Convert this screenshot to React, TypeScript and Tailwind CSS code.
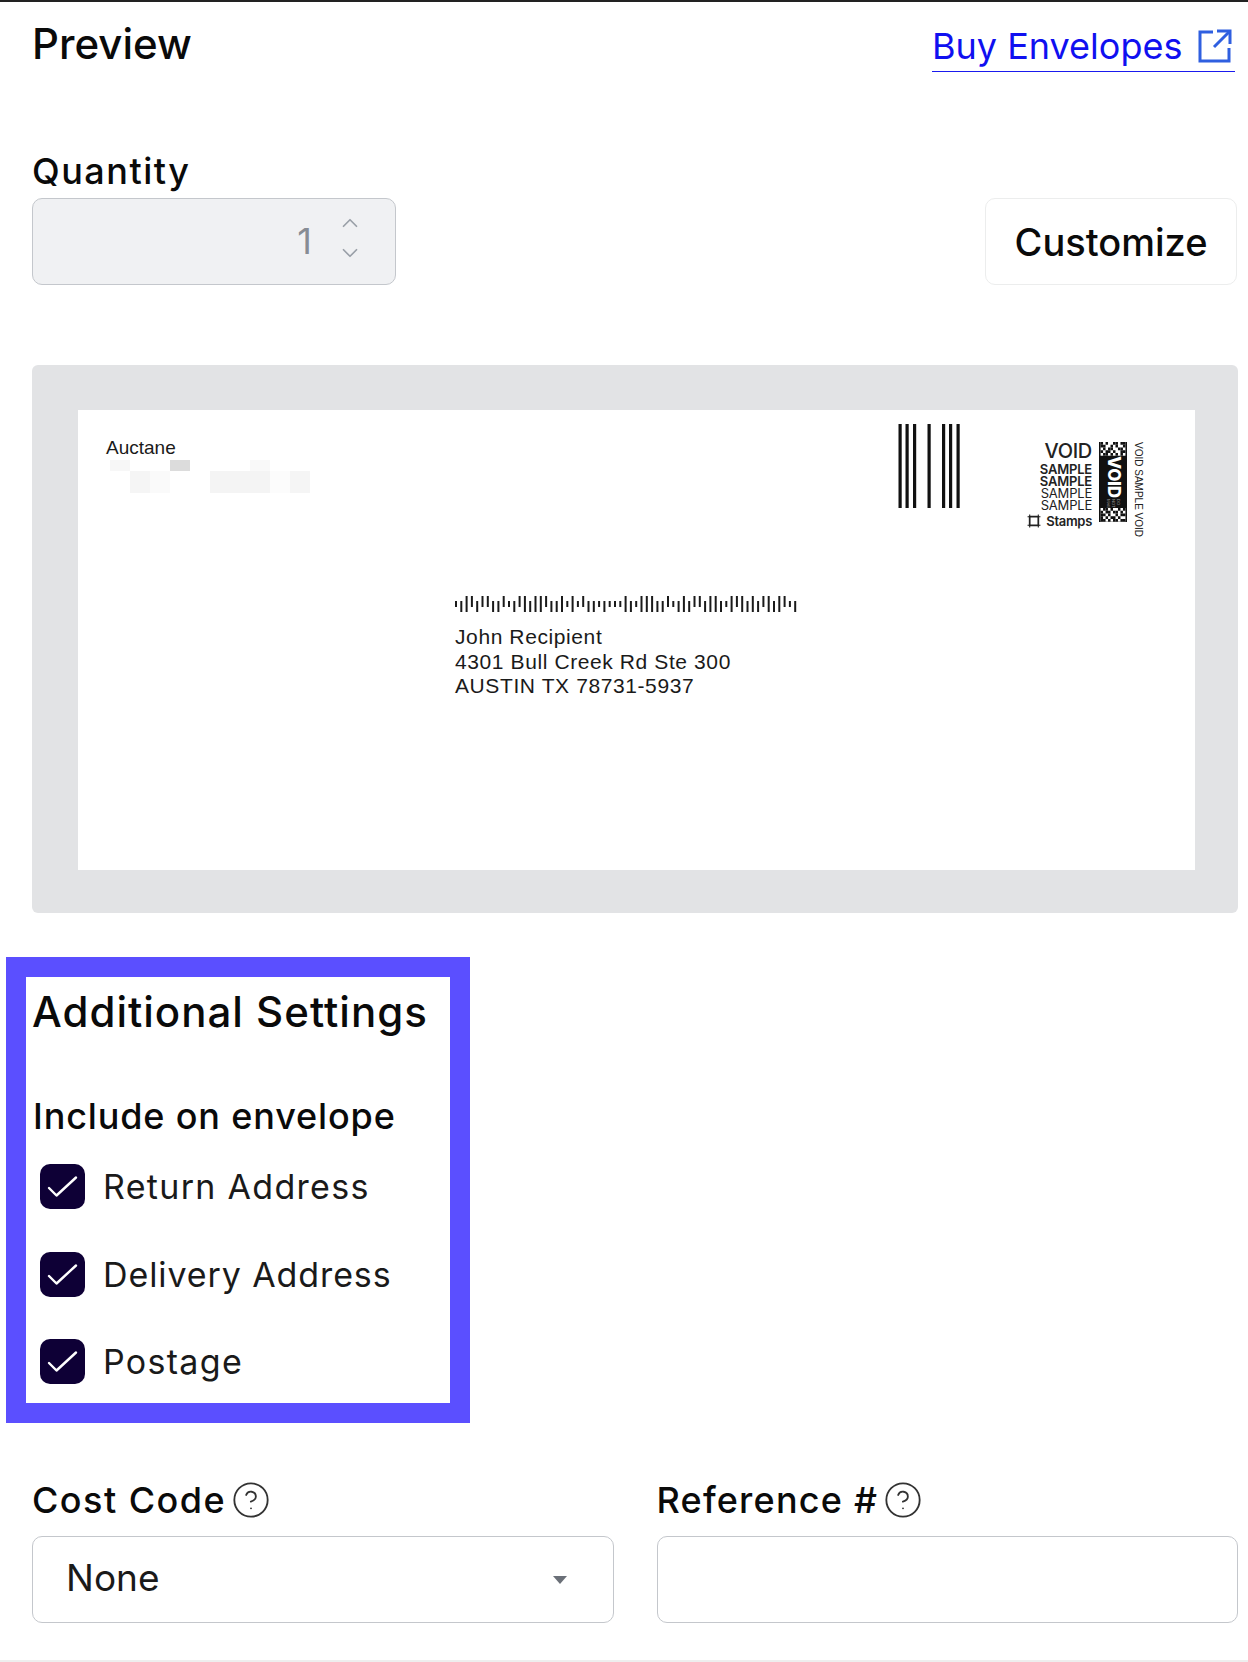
import { ChevronDown, ChevronUp, CircleHelp } from "lucide-react";

const uiFont = "font-['Inter',sans-serif]";
const printFont = "font-['Liberation_Sans',Arial,sans-serif]";

// 4-state barcode: F full, A ascender, D descender, T tracker
const imb = "TDFADAADDATDAFDFFADDFTFTADDTDTTTFDTFFFDDATDFDAADFFDTFAFDFDAFDFATD";

// blurred-out return address, one cell per 20px, grey value
const mosaic = [
  ["bg-[#f7f7f7]", "", "", "bg-[#dcdcdc]", "", "", "", "bg-[#f9f9f9]", "", ""],
  ["", "bg-[#f5f5f5]", "bg-[#fafafa]", "", "", "bg-[#f4f4f4]", "bg-[#f4f4f4]", "bg-[#f4f4f4]", "bg-[#fcfcfc]", "bg-[#f5f5f5]"],
  ["", "bg-[#f5f5f5]", "bg-[#fafafa]", "", "", "bg-[#f4f4f4]", "bg-[#f4f4f4]", "bg-[#f4f4f4]", "bg-[#fcfcfc]", "bg-[#f5f5f5]"],
];

const checks = [
  { label: "Return Address", tracking: "tracking-[1.3px]" },
  { label: "Delivery Address", tracking: "tracking-[0.9px]" },
  { label: "Postage", tracking: "tracking-[1.3px]" },
];

function ImbBarcode() {
  return (
    <svg width="343" height="16" viewBox="0 0 343 16" className="block">
      {imb.split("").map((bar, i) => {
        const top = bar === "F" || bar === "A" ? 0 : 5;
        const bottom = bar === "F" || bar === "D" ? 16 : 11;
        return <rect key={i} x={i * 5.3} y={top} width="2" height={bottom - top} fill="#1a1a1a" />;
      })}
    </svg>
  );
}

function FimMark() {
  return (
    <svg width="62" height="84" viewBox="0 0 62 84" className="block shrink-0">
      {[2, 9, 16.5, 31, 45.5, 52.5, 60].map((x) => (
        <rect key={x} x={x - 1.5} y="0" width="3.2" height="84" fill="#111" />
      ))}
    </svg>
  );
}

function Matrix({ cells }: { cells: string[] }) {
  return (
    <svg width="28" height="16" viewBox="0 0 29 16" className="block">
      <rect width="29" height="16" fill="#fff" />
      {cells.map((row, y) =>
        row.split("").map((c, x) =>
          c === "1" ? <rect key={`${x}-${y}`} x={x * 2.9} y={y * 3.2} width="2.9" height="3.2" fill="#111" /> : null
        )
      )}
    </svg>
  );
}

function Indicium() {
  return (
    <div className="ml-[66px] mt-[32px] flex items-start text-[#222]">
      <div className={`flex w-[66px] flex-col items-end ${uiFont}`}>
        <span className="text-[20px] font-medium leading-[18px] tracking-[-0.3px]">VOID</span>
        <div className="mt-[3px] flex flex-col items-end text-[13px] font-semibold leading-[12px] tracking-[-0.2px]">
          <span>SAMPLE</span>
          <span>SAMPLE</span>
          <span className="font-normal">SAMPLE</span>
          <span className="font-normal">SAMPLE</span>
        </div>
        <div className="mt-[3px] flex items-center gap-[5px]">
          <svg width="14" height="14" viewBox="0 0 13 13" className="block shrink-0">
            <path d="M2.5 2.5h8v8h-8z" fill="none" stroke="#222" strokeWidth="1.6" />
            <path d="M0.5 2.5h2M10.5 2.5h2M0.5 10.5h2M10.5 10.5h2M2.5 0.5v2M10.5 0.5v2M2.5 10.5v2M10.5 10.5v2" stroke="#222" strokeWidth="1" />
          </svg>
          <span className="text-[13px] font-semibold leading-[14px] tracking-[-0.3px]">Stamps</span>
        </div>
      </div>
      <div className="ml-[7px] flex h-[80px] w-[28px] flex-col bg-[#111]">
        <Matrix cells={["1010011011", "1100101001", "0101100110", "1011010011", "0110101010"]} />
        <div className="flex flex-1 items-center justify-center gap-[1px] text-white [writing-mode:vertical-rl]">
          <span className={`text-[17px] font-extrabold leading-[17px] tracking-[-0.2px] ${uiFont}`}>VOID</span>
          <span className={`text-[4px] leading-[5px] text-[#999] ${uiFont}`}>DO NOT MAIL</span>
        </div>
        <Matrix cells={["0110100101", "1011011010", "1101001011", "1010110100", "1101011011"]} />
      </div>
      <span className={`ml-[6px] text-[10px] leading-[10px] text-[#222] [writing-mode:vertical-rl] ${printFont}`}>VOID SAMPLE VOID</span>
    </div>
  );
}

function Envelope() {
  return (
    <div className="mt-[80px] h-[548px] w-[1206px] rounded-[6px] bg-[#e2e3e5] pl-[46px] pr-[43px] pt-[45px]">
      <div className="h-[460px] bg-white">
        <div className="flex h-[127px] items-start pr-[52px]">
          <div className="ml-[28px] pt-[26px]">
            <div className={`text-[19px] leading-[24px] text-[#1a1a1a] ${printFont}`}>Auctane</div>
            <div className="ml-[4px] grid w-[200px] grid-cols-10">
              {mosaic.map((row, y) =>
                row.map((cell, x) => <div key={`${x}-${y}`} className={`h-[11px] ${cell}`} />)
              )}
            </div>
          </div>
          <div className="ml-auto mt-[14px]">
            <FimMark />
          </div>
          <Indicium />
        </div>
        <div className="ml-[377px] mt-[59px]">
          <ImbBarcode />
          <div className={`mt-[13px] text-[21px] leading-[24.5px] tracking-[0.6px] text-[#1a1a1a] ${printFont}`}>
            <div>John Recipient</div>
            <div>4301 Bull Creek Rd Ste 300</div>
            <div>AUSTIN TX 78731-5937</div>
          </div>
        </div>
      </div>
    </div>
  );
}

function CheckRow({ label, tracking }: { label: string; tracking: string }) {
  return (
    <div className="flex h-[45px] items-center">
      <span className="ml-[7px] flex h-[45px] w-[45px] items-center justify-center rounded-[10px] bg-[#0e0036]">
        <svg width="45" height="45" viewBox="0 0 45 45" fill="none" stroke="#fff" strokeWidth="2.4" strokeLinecap="round" strokeLinejoin="round">
          <path d="M9 24l7.5 7.5L36 13.5" />
        </svg>
      </span>
      <span className={`ml-[18px] text-[34px] leading-[45px] text-[#1a1a1a] ${tracking}`}>{label}</span>
    </div>
  );
}

function FieldLabel({ label, tracking }: { label: string; tracking: string }) {
  return (
    <div className="flex h-[42px] items-center gap-[5px]">
      <span className={`text-[36px] font-medium leading-[42px] text-[#0a0a0a] ${tracking}`}>{label}</span>
      <CircleHelp size={40} strokeWidth={1.1} className="text-[#333]" />
    </div>
  );
}

export default function App() {
  return (
    <div className={`h-[1662px] w-[1248px] overflow-hidden border-b-2 border-t-2 border-b-[#eeeeee] border-t-[#222] bg-white ${uiFont}`}>
      <div className="pl-8 pr-[10px]">
        <div className="flex h-[70px] items-start justify-between pr-[3px]">
          <h1 className="mt-[19px] text-[42px] font-medium leading-[46px] text-[#0a0a0a]">Preview</h1>
          <a className="flex h-[70px] w-[303px] items-center border-b-[1.5px] border-[#1a1aee] pt-[26px] pb-[7px] text-[#1010f0]">
            <span className="text-[36px] leading-[40px]">Buy Envelopes</span>
            <svg width="36" height="36" viewBox="0 0 36 36" fill="none" stroke="#2f5fe0" strokeWidth="3" className="ml-auto mr-[2px]">
              <path d="M16 4H3v29h29V20" />
              <path d="M20 3h13v13" />
              <path d="M33 3L17 19" />
            </svg>
          </a>
        </div>
        <div className="mt-[78px] flex items-end justify-between pr-px">
          <div>
            <div className="mb-[6px] h-[42px] text-[36px] font-medium leading-[42px] tracking-[1.5px] text-[#0a0a0a]">Quantity</div>
            <div className="flex h-[87px] w-[364px] items-center justify-end rounded-[10px] border-[1.5px] border-[#c4c7cc] bg-[#f0f1f3] pr-[32px]">
              <span className="-mt-[2px] text-[36px] leading-[40px] text-[#878c94]">1</span>
              <span className="-mt-[8px] ml-[25px] flex flex-col">
                <ChevronUp size={26} strokeWidth={1.6} className="text-[#9aa0a8]" />
                <ChevronDown size={26} strokeWidth={1.6} className="mt-[4px] text-[#9aa0a8]" />
              </span>
            </div>
          </div>
          <button className="flex h-[87px] w-[252px] items-center justify-center rounded-[10px] border-[1.5px] border-[#eceded] text-[38px] font-medium text-[#0a0a0a]">
            <span className="mt-[1px]">Customize</span>
          </button>
        </div>
        <Envelope />
      </div>

      <section className="ml-[6px] mt-[44px] h-[466px] w-[464px] border-[20px] border-[#5b4fff] pl-[7px] pt-[13px]">
        <h2 className="-ml-px h-[44px] text-[42px] font-medium leading-[44px] tracking-[1px] whitespace-nowrap text-[#0a0a0a]">Additional Settings</h2>
        <h3 className="mt-[61px] h-[42px] text-[36px] font-medium leading-[42px] tracking-[0.85px] whitespace-nowrap text-[#0a0a0a]">Include on envelope</h3>
        <div className="mt-[27px] flex flex-col gap-[42.5px]">
          {checks.map((c) => (
            <CheckRow key={c.label} label={c.label} tracking={c.tracking} />
          ))}
        </div>
      </section>

      <div className="mt-[56px] grid grid-cols-2 gap-x-[43px] pl-8 pr-[10px]">
        <div>
          <FieldLabel label="Cost Code" tracking="tracking-[1.45px]" />
          <div className="mt-[15px] flex h-[87px] items-center justify-between rounded-[10px] border-[1.5px] border-[#c4c7cc] pl-[33px] pr-[46px]">
            <span className="-mt-[4px] text-[37px] leading-[40px] text-[#1a1a1a]">None</span>
            <span className="h-0 w-0 border-x-[7px] border-t-[8px] border-x-transparent border-t-[#6b7078]" />
          </div>
        </div>
        <div>
          <FieldLabel label="Reference #" tracking="tracking-[1.2px]" />
          <div className="mt-[15px] h-[87px] rounded-[10px] border-[1.5px] border-[#c4c7cc]" />
        </div>
      </div>
    </div>
  );
}
